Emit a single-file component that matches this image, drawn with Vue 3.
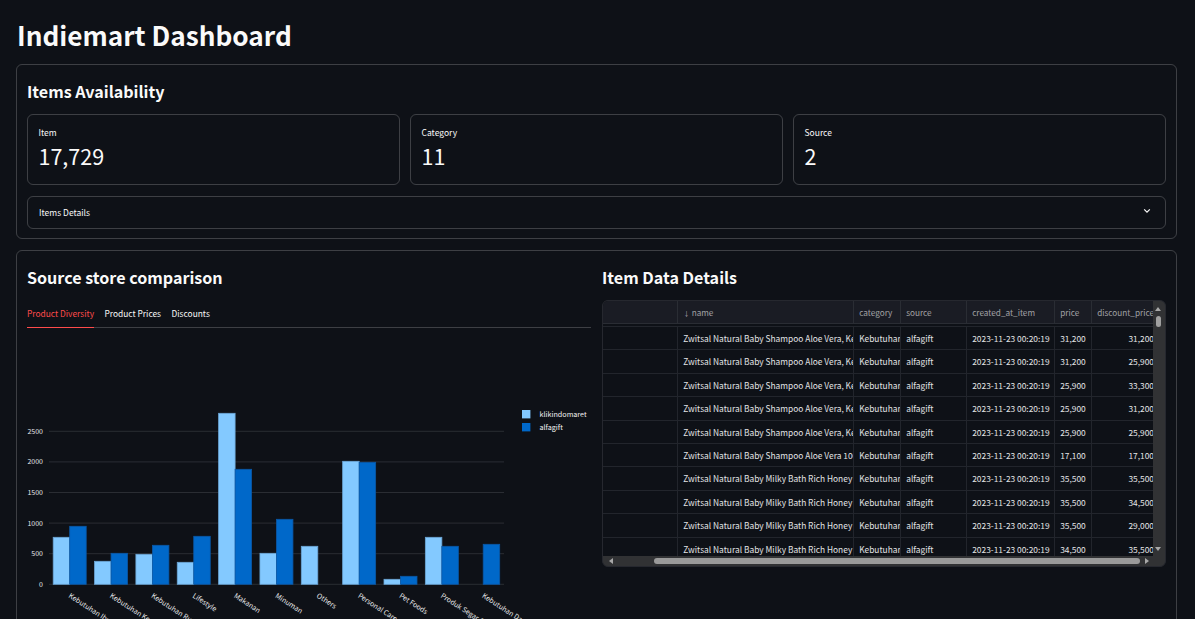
<template>
  <div class="page">
    <h1 class="page-title">Indiemart Dashboard</h1>

    <section class="card first-card">
      <h2 class="section-title">Items Availability</h2>
      <div class="metrics">
        <div v-for="m in metrics" :key="m.label" class="metric">
          <div class="metric-label">{{ m.label }}</div>
          <div class="metric-value">{{ m.value }}</div>
        </div>
      </div>
      <div class="expander">
        <span>Items Details</span>
        <svg width="12" height="12" viewBox="0 0 12 12" fill="none">
          <path d="M3.2 3.4 6 6.2l2.8-2.8" stroke="#fafafa" stroke-width="1.2" />
        </svg>
      </div>
    </section>

    <section class="card columns">
      <div class="col">
        <h2 class="section-title">Source store comparison</h2>
        <div class="tabs">
          <span v-for="(t, i) in tabs" :key="t" class="tab" :class="{ active: i === 0 }">{{ t }}</span>
        </div>
        <svg class="chart" width="564" height="300" viewBox="0 0 564 300">
          <g v-for="t in ticks" :key="t.label">
            <line x1="22" :x2="477" :y1="t.y" :y2="t.y" stroke="#2a2d33" stroke-width="1" />
            <text x="16" :y="t.y + 2.5" text-anchor="end" class="axis-text">{{ t.label }}</text>
          </g>
          <g v-for="b in bars" :key="b.key">
            <rect :x="b.x" :y="b.y" width="16.5" :height="b.h" :fill="b.fill" :stroke="b.stroke" stroke-width="0.8" />
          </g>
          <text
            v-for="l in xLabels"
            :key="l.text"
            class="axis-text"
            :transform="`translate(${l.x} ${l.y}) rotate(33)`"
          >{{ l.text }}</text>
          <rect x="495" y="82" width="8.4" height="8.4" fill="#83c9ff" />
          <rect x="495" y="95" width="8.4" height="8.4" fill="#0068c9" />
          <text x="512.5" y="89" class="legend-text">klikindomaret</text>
          <text x="512.5" y="102" class="legend-text">alfagift</text>
        </svg>
      </div>

      <div class="col">
        <h2 class="section-title">Item Data Details</h2>
        <div class="table-frame">
          <div class="table-main">
            <div class="table-view">
              <div class="row head">
                <div v-for="c in columns" :key="c.key" class="cell" :style="{ width: c.width + 'px' }">
                  <span v-if="c.sorted" class="sort">↓</span>{{ c.title }}
                </div>
              </div>
              <div class="head-gap"></div>
              <div v-for="(r, i) in rows" :key="i" class="row">
                <div
                  v-for="c in columns"
                  :key="c.key"
                  class="cell"
                  :class="{ num: c.key === 'discount' }"
                  :style="{ width: c.width + 'px' }"
                >{{ r[c.key] }}</div>
              </div>
            </div>
            <div class="vbar">
              <span class="arrow up"></span>
              <span class="vthumb"></span>
              <span class="arrow down"></span>
            </div>
          </div>
          <div class="hbar">
            <span class="arrow left"></span>
            <span class="hthumb"></span>
            <span class="arrow right"></span>
          </div>
        </div>
      </div>
    </section>
  </div>
</template>

<script setup>
const metrics = [
  { label: 'Item', value: '17,729' },
  { label: 'Category', value: '11' },
  { label: 'Source', value: '2' },
]
const tabs = ['Product Diversity', 'Product Prices', 'Discounts']

// chart origin in svg space
const baseY = 256.3
const ticks = [0, 500, 1000, 1500, 2000, 2500].map((v) => ({
  label: String(v),
  y: baseY - (v / 500) * 30.6,
}))

// bar heights read in px from the reference
const light = [47, 23, 30, 22, 171, 31, 38, 123, 5, 47, 0]
const dark = [58, 31, 39, 48, 115, 65, 0, 122, 8, 38, 40]
const bars = []
light.forEach((h, i) => {
  const x = 26.2 + i * 41.35
  if (h) bars.push({ key: 'k' + i, x, y: baseY - h, h, fill: '#83c9ff', stroke: '#6ba6d6' })
  if (dark[i]) bars.push({ key: 'a' + i, x: x + 16.5, y: baseY - dark[i], h: dark[i], fill: '#0068c9', stroke: '#0a58a6' })
})

const xLabels = [
  'Kebutuhan Ibu & Anak',
  'Kebutuhan Kesehatan',
  'Kebutuhan Rumah Tangga',
  'Lifestyle',
  'Makanan',
  'Minuman',
  'Others',
  'Personal Care',
  'Pet Foods',
  'Produk Segar & Beku',
  'Kebutuhan Dapur',
].map((text, i) => ({ text, x: 41 + i * 41.35, y: 269 }))

const columns = [
  { key: 'index', title: '', width: 75 },
  { key: 'name', title: 'name', width: 176, sorted: true },
  { key: 'category', title: 'category', width: 47 },
  { key: 'source', title: 'source', width: 66 },
  { key: 'created', title: 'created_at_item', width: 88 },
  { key: 'price', title: 'price', width: 37 },
  { key: 'discount', title: 'discount_price', width: 63 },
]

const shampoo = 'Zwitsal Natural Baby Shampoo Aloe Vera, Kemasan 200 ml'
const shampoo100 = 'Zwitsal Natural Baby Shampoo Aloe Vera 100 ml'
const honey = 'Zwitsal Natural Baby Milky Bath Rich Honey 200 ml'
const rows = [
  [shampoo, '31,200', '31,200'],
  [shampoo, '31,200', '25,900'],
  [shampoo, '25,900', '33,300'],
  [shampoo, '25,900', '31,200'],
  [shampoo, '25,900', '25,900'],
  [shampoo100, '17,100', '17,100'],
  [honey, '35,500', '35,500'],
  [honey, '35,500', '34,500'],
  [honey, '35,500', '29,000'],
  [honey, '34,500', '35,500'],
].map(([name, price, discount]) => ({
  index: '',
  name,
  category: 'Kebutuhan Ibu & Anak',
  source: 'alfagift',
  created: '2023-11-23 00:20:19',
  price,
  discount,
}))
</script>

<style>
html, body {
  margin: 0;
  height: 100%;
  overflow: hidden;
  background: #0e1117;
}
</style>

<style scoped>
.page {
  box-sizing: border-box;
  width: 1195px;
  padding: 16px 18px 16px 16px;
  background: #0e1117;
  color: #fafafa;
  font-family: "Noto Sans CJK SC", "Noto Sans", sans-serif;
}
.page-title {
  margin: 0 0 10px 1px;
  font-size: 26.2px;
  line-height: 38px;
  font-weight: 700;
}
.card {
  border: 1px solid rgba(250, 250, 250, 0.2);
  border-radius: 6px;
  padding: 10px;
  margin-bottom: 11px;
}
.first-card {
  padding-bottom: 9px;
}
.section-title {
  margin: 0 0 7px;
  font-size: 16.1px;
  line-height: 32px;
  font-weight: 600;
}
.metrics {
  display: grid;
  grid-template-columns: repeat(3, 1fr);
  gap: 10px;
}
.metric {
  box-sizing: border-box;
  height: 71px;
  border: 1px solid rgba(250, 250, 250, 0.2);
  border-radius: 6px;
  padding: 9px 11px 9px 10.5px;
}
.metric-label {
  font-size: 8.5px;
  line-height: 16px;
}
.metric-value {
  font-size: 21.5px;
  line-height: 32px;
}
.expander {
  box-sizing: border-box;
  height: 33px;
  margin-top: 11px;
  border: 1px solid rgba(250, 250, 250, 0.2);
  border-radius: 6px;
  padding: 0 12px 2px 11px;
  display: flex;
  align-items: center;
  justify-content: space-between;
  font-size: 8.5px;
}
.columns {
  display: grid;
  grid-template-columns: 564px 564px;
  column-gap: 11px;
  height: 420px;
}
.tabs {
  display: flex;
  gap: 10.5px;
  height: 28px;
  box-sizing: border-box;
  border-bottom: 1px solid rgba(250, 250, 250, 0.2);
  font-size: 8.4px;
  line-height: 26px;
}
.tab {
  height: 28px;
  box-sizing: border-box;
}
.tab.active {
  color: #ff4b4b;
  border-bottom: 1px solid #ff4b4b;
}
.chart {
  display: block;
}
.axis-text {
  font-size: 7px;
  fill: #e6e7ea;
}
.legend-text {
  font-size: 7.2px;
  fill: #f4f4f4;
}
.table-frame {
  height: 267px;
  box-sizing: border-box;
  border: 1px solid #26282f;
  border-radius: 6px;
  overflow: hidden;
  background: #313234;
  display: flex;
  flex-direction: column;
}
.table-main {
  display: flex;
  height: 255px;
}
.table-view {
  width: 552px;
  overflow: hidden;
  background: #0e1117;
}
.row {
  display: flex;
  height: 23.4px;
  box-sizing: border-box;
  border-bottom: 1px solid #22252c;
}
.row.head {
  height: 23px;
  background: #1a1c24;
  border-bottom: 1px solid #2a2d34;
}
.head-gap {
  height: 2px;
  border-bottom: 1px solid #22252c;
  box-sizing: content-box;
}
.cell {
  flex: none;
  box-sizing: border-box;
  padding: 0 0 0 5.2px;
  font-size: 8.4px;
  line-height: 23px;
  white-space: nowrap;
  overflow: hidden;
  border-right: 1px solid #22252c;
  color: #e3e4e6;
}
.head .cell {
  color: rgba(250, 250, 250, 0.6);
  font-size: 8.2px;
  border-right-color: #2a2d34;
}
.sort {
  font-size: 6.5px;
  margin-right: 2px;
}
.cell:last-child {
  border-right: none;
}
.cell.num {
  text-align: right;
  padding-right: 1px;
}
.vbar {
  width: 12px;
  flex: none;
  position: relative;
}
.hbar {
  height: 11px;
  position: relative;
}
.vthumb {
  position: absolute;
  left: 2.5px;
  top: 15px;
  width: 5.5px;
  height: 11px;
  border-radius: 3px;
  background: #a0a0a0;
}
.hthumb {
  position: absolute;
  left: 51px;
  top: 2px;
  width: 486px;
  height: 6px;
  border-radius: 3px;
  background: #9a9a9a;
}
.arrow {
  position: absolute;
  width: 0;
  height: 0;
}
.arrow.up {
  left: 2px;
  top: 6px;
  border-left: 3.5px solid transparent;
  border-right: 3.5px solid transparent;
  border-bottom: 4px solid #a8a8a8;
}
.arrow.down {
  left: 2px;
  bottom: 5px;
  border-left: 3.5px solid transparent;
  border-right: 3.5px solid transparent;
  border-top: 4px solid #a8a8a8;
}
.arrow.left {
  left: 6px;
  top: 2px;
  border-top: 3px solid transparent;
  border-bottom: 3px solid transparent;
  border-right: 4px solid #a8a8a8;
}
.arrow.right {
  right: 16px;
  top: 2px;
  border-top: 3px solid transparent;
  border-bottom: 3px solid transparent;
  border-left: 4px solid #a8a8a8;
}
</style>
